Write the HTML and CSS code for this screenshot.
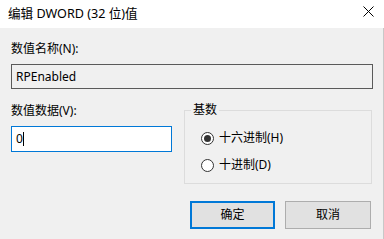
FILE: index.html
```html
<!DOCTYPE html>
<html lang="zh-CN">
<head>
<meta charset="utf-8">
<link rel="stylesheet" href="styles.css">
</head>
<body>
<div class="window">
  <div class="titlebar">
    <span class="title">编辑 DWORD (32 位)值</span>
    <span class="close">
      <svg width="11" height="11" viewBox="0 0 11 11"><path d="M0.5 0.5 L10.5 10.5 M10.5 0.5 L0.5 10.5" stroke="#000" stroke-width="1" fill="none"/></svg>
    </span>
  </div>
  <div class="content">
    <div class="label first">数值名称(N):</div>
    <div class="field readonly">RPEnabled</div>
    <div class="row">
      <div class="col">
        <div class="label second">数值数据(V):</div>
        <div class="field focus">0<span class="caret"></span></div>
      </div>
      <fieldset class="group">
        <legend>基数</legend>
        <div class="radios">
          <div class="radio-row"><span class="radio checked"></span><span>十六进制(H)</span></div>
          <div class="radio-row"><span class="radio"></span><span>十进制(D)</span></div>
        </div>
      </fieldset>
    </div>
    <div class="buttons">
      <div class="btn default">确定</div>
      <div class="btn">取消</div>
    </div>
  </div>
</div>
</body>
</html>
```
FILE: styles.css
```css
* { box-sizing: border-box; }
html, body {
  margin: 0;
  padding: 0;
  background: #f0f0f0;
}
body {
  font-family: "Noto Sans", "Noto Sans CJK SC", sans-serif;
  font-size: 12px;
  line-height: 16px;
  color: #000;
}
.window {
  width: 384px;
  height: 239px;
  display: flex;
  flex-direction: column;
  overflow: hidden;
}
.titlebar {
  height: 28px;
  background: #fff;
  display: flex;
  align-items: center;
  justify-content: space-between;
  padding-left: 8px;
  padding-bottom: 1px;
}
.title {
  font-size: 12.6px;
}
.close {
  width: 11px;
  height: 11px;
  margin-right: 10px;
  margin-bottom: 4px;
  display: flex;
}
.content {
  flex: 1;
  background: #f0f0f0;
  padding: 13px 11px 0 11px;
  display: flex;
  flex-direction: column;
  border-right: 1px solid #c8c8c8;
}
.label.first { height: 16px; }
.field {
  margin-top: 7px;
  height: 25px;
  border: 1px solid #5a5a5a;
  padding-left: 4px;
  display: flex;
  align-items: center;
}
.field.readonly {
  background: #f0f0f0;
  width: 362px;
}
.field.focus {
  background: #fff;
  border-color: #0078d7;
  width: 161px;
  height: 26px;
}
.caret {
  display: inline-block;
  width: 1px;
  height: 14px;
  background: #000;
}
.row {
  margin-top: 13px;
  display: flex;
  gap: 12px;
  align-items: flex-start;
}
.col {
  display: flex;
  flex-direction: column;
}
.label.second { margin-top: 1px; }
.group {
  margin: 0;
  width: 190px;
  border: 1px solid #dcdcdc;
  padding: 0 0 10px 6px;
  min-width: 0;
}
.group legend {
  padding: 0 2px;
  line-height: 16px;
}
.radios {
  padding: 12px 0 0 10px;
  display: flex;
  flex-direction: column;
  gap: 11px;
}
.radio-row {
  display: flex;
  align-items: center;
  gap: 5px;
  height: 16px;
}
.radio {
  width: 13px;
  height: 13px;
  border: 1px solid #333;
  border-radius: 50%;
  background: #fff;
  display: flex;
  align-items: center;
  justify-content: center;
}
.radio.checked::after {
  content: "";
  width: 7px;
  height: 7px;
  border-radius: 50%;
  background: #333;
}
.buttons {
  margin-top: 17px;
  display: flex;
  justify-content: flex-end;
  gap: 10px;
  margin-right: 1px;
}
.btn {
  width: 86px;
  height: 28px;
  background: #e1e1e1;
  border: 1px solid #adadad;
  display: flex;
  align-items: center;
  justify-content: center;
}
.btn.default {
  width: 85px;
  border: 2px solid #0078d7;
}
```
